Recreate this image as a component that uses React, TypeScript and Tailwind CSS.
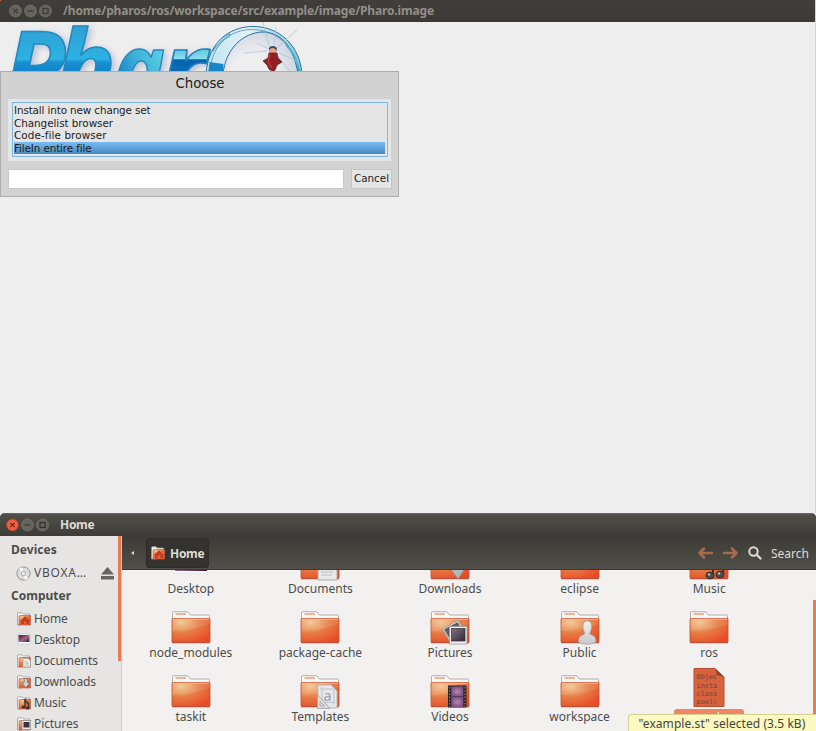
import React from "react";

const ui = "font-['Noto_Sans',sans-serif]";

function WinButtons({ active }: { active?: boolean }) {
  const fill = active ? "#66645e" : "#65635d";
  const ink = active ? "#2f2e2a" : "#3b3a36";
  return (
    <svg width="45" height="14" viewBox="0 0 45 14" className="shrink-0">
      <circle cx="7.500" cy="7" r="6" fill={active ? "#ee6040" : fill} stroke={active ? "#a63c20" : "#74726c"} strokeWidth=".7" />
      <path d="M5.300 4.800l4.400 4.400M9.700 4.800L5.300 9.200" stroke={active ? "#6f2815" : ink} strokeWidth="1.2" />
      <circle cx="22.500" cy="7" r="6" fill={fill} stroke="#787670" strokeWidth=".7" />
      <path d="M19.500 7h6" stroke={ink} strokeWidth="1.2" />
      <circle cx="37.500" cy="7" r="6" fill={fill} stroke="#787670" strokeWidth=".7" />
      <rect x="35" y="4.500" width="5" height="5" fill="none" stroke={ink} strokeWidth="1.200" />
    </svg>
  );
}

function PharoLogo() {
  return (
    <svg width="320" height="120" viewBox="0 22 320 120" className="block">
      <defs>
        <linearGradient id="blue" gradientUnits="userSpaceOnUse" x1="0" y1="25" x2="0" y2="80">
          <stop offset="0" stopColor="#2f9fd4" />
          <stop offset=".62" stopColor="#2bb3e2" />
          <stop offset=".68" stopColor="#178fd2" />
          <stop offset="1" stopColor="#0c7cc4" />
        </linearGradient>
        <linearGradient id="cyan" gradientUnits="userSpaceOnUse" x1="0" y1="48" x2="0" y2="76">
          <stop offset="0" stopColor="#5cc3e0" />
          <stop offset=".38" stopColor="#8bdcec" />
          <stop offset=".42" stopColor="#0863ae" />
          <stop offset="1" stopColor="#0870bb" />
        </linearGradient>
        <linearGradient id="teal" gradientUnits="userSpaceOnUse" x1="118" y1="74" x2="165" y2="50">
          <stop offset="0" stopColor="#1787cb" />
          <stop offset=".5" stopColor="#42b5d8" />
          <stop offset="1" stopColor="#5cd3e6" />
        </linearGradient>
        <linearGradient id="ring" x1="0" y1="0" x2="1" y2="0">
          <stop offset="0" stopColor="#bfe5f0" />
          <stop offset=".45" stopColor="#e4f3f7" />
          <stop offset="1" stopColor="#79cbe0" />
        </linearGradient>
        <radialGradient id="glow">
          <stop offset=".5" stopColor="#eeeef0" />
          <stop offset="1" stopColor="#cfd4e0" />
        </radialGradient>
      </defs>
      <g className="font-['Open_Sans',sans-serif] font-bold italic drop-shadow-[3px_2px_3px_rgba(130,145,190,0.5)]" strokeWidth="1.600" fontSize="100">
        <text x="4" y="103.500" textLength="61" lengthAdjust="spacingAndGlyphs" fill="url(#blue)" stroke="#2489bf">P</text>
        <text x="55" y="102.500" textLength="61" lengthAdjust="spacingAndGlyphs" fill="url(#blue)" stroke="#2489bf">h</text>
        <text x="113" y="105" textLength="52" lengthAdjust="spacingAndGlyphs" fill="url(#teal)" stroke="#2489bf">a</text>
        <text x="160" y="105" textLength="46" lengthAdjust="spacingAndGlyphs" fill="url(#cyan)" stroke="#2383bb">r</text>
      </g>
      <ellipse cx="254" cy="76" rx="45" ry="47" fill="url(#glow)" />
      <path fillRule="evenodd" d="M206 74C208 44 228 26.500 253 26.500C280 26.500 300 46 302 74L298 74C294 48 282 32 262 32C244 33 226 47 223 74Z" fill="url(#ring)" stroke="#2b709e" strokeWidth="1" />
      <path d="M209.500 62L223.500 64L223 74H208Z" fill="#1688c9" />
      <path d="M210 74C210 51 224 31 250 29.500C276 29 295 46 300 74" fill="none" stroke="#3a7ba5" strokeWidth=".7" />
      <path d="M213 51C216 42 222 36 230 34L229 37C223 39 218 44 213 51Z" fill="#92d9ee" stroke="#2b709e" strokeWidth=".6" />
      <path d="M287 45C294 52 298 62 299 72L295 61C293 54 289 49 286 46Z" fill="#5fcbe4" stroke="#2b8dad" strokeWidth=".5" />
      <path d="M269 46L263 22M274 45L276 27M277 48L297 30M279 53L299 62M267 51L244 53M269 49L257 43M276 54L293 75" stroke="#a9c6dc" strokeWidth=".8" />
      <path d="M269 49C268 45 277 45 277 49L276 52H270Z" fill="#34536c" />
      <path d="M270 49C272 47 275 48 276 50L277 54H269Z" fill="#f3a174" />
      <path d="M269 53H277L278 58L282 62L277 65L275 70L273 72L269 69L267 65L263 61L268 58Z" fill="#941e24" stroke="#4d2d38" strokeWidth=".8" />
      <path d="M270 54L268 62L272 68" fill="none" stroke="#c84748" strokeWidth="1" />
    </svg>
  );
}

const choices = [
  ["Install into new change set", "tracking-[-0.13px]"],
  ["Changelist browser", "tracking-[-0.05px]"],
  ["Code-file browser", "tracking-[0.09px]"],
  ["FileIn entire file", "w-[371px] bg-linear-to-b from-[#78bdf5] to-[#4b87bd] tracking-[-0.13px]"],
];

function ChooseDialog() {
  return (
    <div className="absolute left-0 top-[71px] flex h-[126px] w-[399px] flex-col border border-[#aeaeae] bg-[#d2d2d2] pl-[7px] font-['DejaVu_Sans',sans-serif] text-[#1c1c1c]">
      <div className="mt-1 flex h-[23px] items-start justify-center pr-[6px] text-[13.3px] leading-[16px]">Choose</div>
      <div className="h-[62px] w-[383px] bg-[#e5e5e5] px-1 pt-[3px]">
        <div className="h-[55px] w-[376px] border border-[#7db5e5] px-px pt-px">
          {choices.map(([label, look]) => (
            <div key={label} className={`h-[12.5px] whitespace-nowrap text-[10.4px] leading-[12.5px] ${look}`}>{label}</div>
          ))}
        </div>
      </div>
      <div className="mt-2 flex gap-[7px]">
        <div className="h-5 w-[336px] border border-[#c8c8c8] bg-white" />
        <div className="flex h-5 w-[41px] items-center justify-center border border-[#c6c6c6] bg-[#e5e5e5] text-[10.4px]">Cancel</div>
      </div>
    </div>
  );
}

type Kind = "plain" | "desktop" | "docs" | "down" | "music" | "pics" | "public" | "templates" | "video" | "home";

function Emblem({ kind }: { kind: Kind }) {
  switch (kind) {
    case "docs":
      return <g><path d="M18 12H33L37 16V33H18Z" fill="#e8e8e8" stroke="#aaa" /><path d="M21 18H33M21 22H33M21 25H33M21 28H32" stroke="#bbb" /></g>;
    case "down":
      return <path d="M23 10H31V20H36L28 32L19 20H23Z" fill="#b8b8b8" stroke="#9a8a84" />;
    case "music":
      return <g fill="#4c4b49" stroke="#333"><ellipse cx="21" cy="28.500" rx="4" ry="3.500" /><ellipse cx="31" cy="27.500" rx="4" ry="3.500" /><path d="M24 27V12L34 10V26" fill="none" strokeWidth="2" /><circle cx="20" cy="27.500" r="1.200" fill="#bbb" stroke="none" /><circle cx="30" cy="26.500" r="1.200" fill="#bbb" stroke="none" /></g>;
    case "pics":
      return (
        <g>
          <path d="M13 18L28 10L34 22L20 30Z" fill="#625b62" stroke="#ddd" strokeWidth="1.500" />
          <path d="M19 29L12.300 18L28 9.200L31 14" fill="none" stroke="#777" strokeWidth=".6" />
          <rect x="19.500" y="15.500" width="17.500" height="17.500" fill="#eee" stroke="#999" strokeWidth=".8" />
          <rect x="21.500" y="17.500" width="13.500" height="12.500" fill="url(#photo)" stroke="#342d37" strokeWidth=".7" />
        </g>
      );
    case "public":
      return <path d="M18.500 31C18.500 26 20 25 24 23.500C25.500 22.500 23.500 20 23 17V14C23.500 8.500 31 8.500 31.500 14V17C31 20 29 22.500 30.500 23.500C34.500 25 36 26 36 31C31 34 23 34 18.500 31Z" fill="url(#silver)" stroke="#a3a3a3" strokeWidth=".8" />;
    case "templates":
      return (
        <g>
          <path d="M18 10H31L37 16V33H26L18 24Z" fill="#e8e8ea" stroke="#bbb" />
          <path d="M20 14H34M22 12V27M34 14V29M20 27.500H35" stroke="#c1c2c8" />
          <text x="23.500" y="26" fontSize="14" fill="#a0a2b0" className="font-['Noto_Sans',sans-serif] font-medium">a</text>
          <path d="M17.500 20V33.300H30Z" fill="#e0e0e4" stroke="#aaa" /><path d="M20 26V31H25Z" fill="#cfcdd3" stroke="#b3b3b8" />
        </g>
      );
    case "video":
      return (
        <g>
          <rect x="18" y="10.500" width="18.500" height="22" fill="#29242a" />
          <rect x="21.300" y="11.500" width="12" height="10" fill="url(#film)" />
          <rect x="21.300" y="22" width="12" height="10" fill="url(#film)" />
          <path d="M19.600 12V32M35 12V32" stroke="#b6745c" strokeWidth="1.200" strokeDasharray="1.500 1.700" />
        </g>
      );
    default:
      return null;
  }
}

function Folder({ kind }: { kind: Kind }) {
  if (kind === "desktop") {
    return (
      <svg width="40" height="34" viewBox="0 0 40 34" className="block">
        <rect x="1" y="1" width="38" height="25" rx="2" fill="#fff" stroke="#ddd" strokeWidth=".7" />
        <rect x="4" y="4" width="32" height="20" fill="url(#desk)" />
      </svg>
    );
  }
  return (
    <svg width="40" height="34" viewBox="0 0 40 34" className="block">
      <path d="M1.500 9V1.500Q1.500 .7 2.500 .7H16Q17 .7 18 2L19.300 4H37.500Q38.500 4 38.500 5V9Z" fill="#f8f8f8" stroke="#aaa7a5" strokeWidth=".9" />
      <path d="M4.500 3H15" stroke="#f39c72" strokeWidth="1.300" />
      <rect x="1" y="7.500" width="38" height="24" rx="1" fill="url(#fold)" stroke="#c15130" strokeWidth=".8" />
      <path d="M2 8.300H38" stroke="#f3b48e" />
      <path d="M1.500 20C15 20 29 17 38.500 13V8H1.500Z" fill="#fff" opacity=".1" />
      <path d="M1 31.800H39" stroke="#a94831" strokeWidth=".8" />
      <Emblem kind={kind} />
    </svg>
  );
}

function SmallEmblem({ kind }: { kind: Kind }) {
  switch (kind) {
    case "home":
      return <path d="M2.800 9L8 4.200L13.300 9L12 9.500V12H9.200V9.800H7V12H4.200V9.500Z" fill="#c5401f" />;
    case "docs":
      return <g><path d="M6 4.500H11L13.500 6.500V13H6Z" fill="#eee" stroke="#999" strokeWidth=".7" /><path d="M7.500 7.500H11M7.500 9.300H12M7.500 11H12" stroke="#aaa" strokeWidth=".7" /></g>;
    case "down":
      return <path d="M7.300 3.500H10.300V7.500H13L8.800 12.700L4.800 7.500H7.300Z" fill="#d5d5d5" stroke="#777" strokeWidth=".8" />;
    case "music":
      return <g fill="#3a3937"><ellipse cx="6.500" cy="11" rx="2" ry="1.600" /><ellipse cx="10.500" cy="12" rx="2" ry="1.600" /><path d="M7.500 11V3.500L9 2.500V5L12 7V12H11V8L8.500 6V11Z" stroke="#3a3937" strokeWidth=".5" /></g>;
    case "pics":
      return <g><rect x="5" y="3.500" width="8.800" height="9" fill="#eee" stroke="#888" strokeWidth=".7" /><rect x="6.500" y="5" width="6" height="5.500" fill="#3d3340" /></g>;
    default:
      return null;
  }
}

function SmallFolder({ kind }: { kind: Kind }) {
  if (kind === "desktop") {
    return (
      <svg width="14" height="14" viewBox="0 0 14 14" className="block">
        <rect x=".5" y="1" width="13" height="10" rx="1" fill="#fff" stroke="#bbb" strokeWidth=".6" />
        <rect x="1.500" y="2" width="11" height="7" fill="url(#desk)" />
      </svg>
    );
  }
  return (
    <svg width="14" height="14" viewBox="0 0 14 14" className="block">
      <path d="M.5 13V1.500Q.5 .8 1.200 .8H5L6.300 2H12.500V5H4V13Z" fill="#fafafa" stroke="#9c9894" strokeWidth=".8" />
      <path d="M2 12.500V4.500Q2 3.500 3 3.500H13.500V13H2Z" fill="url(#fold)" stroke="#bd6547" strokeWidth=".7" />
      <SmallEmblem kind={kind} />
    </svg>
  );
}

function PaintDefs() {
  return (
    <svg width="0" height="0" className="absolute">
      <defs>
        <radialGradient id="fold" cx=".25" cy=".15" r=".95">
          <stop offset="0" stopColor="#f2c58d" />
          <stop offset=".5" stopColor="#e67c44" />
          <stop offset="1" stopColor="#e94b27" />
        </radialGradient>
        <linearGradient id="photo" x1="0" y1="0" x2="1" y2="1"><stop stopColor="#83717d" /><stop offset="1" stopColor="#30283a" /></linearGradient>
        <linearGradient id="silver" x1="0" y1="0" x2="0" y2="1"><stop stopColor="#f0f0f0" /><stop offset="1" stopColor="#c8c8c8" /></linearGradient>
        <radialGradient id="film"><stop stopColor="#b786b4" /><stop offset="1" stopColor="#805182" /></radialGradient>
        <linearGradient id="desk" x1="0" y1="0" x2="1" y2="1"><stop stopColor="#3a1730" /><stop offset=".55" stopColor="#a4668a" /><stop offset="1" stopColor="#351329" /></linearGradient>
      </defs>
    </svg>
  );
}

const files: { name: string; kind: Kind }[] = [
  { name: "Desktop", kind: "desktop" },
  { name: "Documents", kind: "docs" },
  { name: "Downloads", kind: "down" },
  { name: "eclipse", kind: "plain" },
  { name: "Music", kind: "music" },
  { name: "node_modules", kind: "plain" },
  { name: "package-cache", kind: "plain" },
  { name: "Pictures", kind: "pics" },
  { name: "Public", kind: "public" },
  { name: "ros", kind: "plain" },
  { name: "taskit", kind: "plain" },
  { name: "Templates", kind: "templates" },
  { name: "Videos", kind: "video" },
  { name: "workspace", kind: "plain" },
];

const places: { name: string; kind: Kind }[] = [
  { name: "Home", kind: "home" },
  { name: "Desktop", kind: "desktop" },
  { name: "Documents", kind: "docs" },
  { name: "Downloads", kind: "down" },
  { name: "Music", kind: "music" },
  { name: "Pictures", kind: "pics" },
];

function SelectedFile() {
  return (
    <div className="-mt-[7px] flex flex-col items-center">
      <svg width="32" height="39" viewBox="0 0 32 39" className="block">
        <path d="M1 .5H22L31 9V38.500H1Z" fill="#d9623e" stroke="#b74e31" />
        <path d="M22 .5L24 7L31 9Z" fill="#984026" />
        <g className="font-['DejaVu_Sans_Mono',monospace]" fontSize="6.900" fill="#73402f">
          <text x="3.500" y="11">Objec</text><text x="3.500" y="19.500">insta</text><text x="3.500" y="28">class</text><text x="3.500" y="36">pool▯</text>
        </g>
      </svg>
      <div className="mt-[2px] h-[18px] w-[70px] rounded-t-[3px] bg-[#f08763] text-center text-[12px] leading-[17px] text-white">example.st</div>
    </div>
  );
}

function Sidebar() {
  return (
    <div className="flex h-[195px] w-[122px] shrink-0 justify-between overflow-hidden border-r border-[#d0cecc] bg-[#e6e5e4]">
      <div className="flex flex-col pl-[11px] text-[12px] text-[#4c4c4c]">
        <div className="h-[25px] shrink-0 font-bold leading-[27px] tracking-[0.05px]">Devices</div>
        <div className="flex h-[24px] shrink-0 items-center gap-[3px] pl-[5px]">
          <svg width="15" height="15" viewBox="0 0 15 15"><circle cx="7.500" cy="7.500" r="6.600" fill="#dedede" stroke="#929292" /><path d="M7.500 7.500L3 2.500L6 1.300ZM7.500 7.500L9 14L12 12.500Z" fill="#fafafa" /><circle cx="7.500" cy="7.500" r="2.200" fill="#eee" stroke="#999" strokeWidth=".8" /></svg>
          <span className="w-[64px] tracking-[0.8px]">VBOXA…</span>
          <svg width="13" height="13" viewBox="0 0 13 13"><path d="M6.500 0L13 7.500H0Z" fill="#666562" /><path d="M0 9H13V12.500H0Z" fill="#666562" /></svg>
        </div>
        <div className="h-[23px] shrink-0 font-bold leading-[22px]">Computer</div>
        {places.map((p) => (
          <div key={p.name} className="flex h-[21px] shrink-0 items-center gap-[3px] pl-[6px]">
            <SmallFolder kind={p.kind} />
            <span className="pt-px tracking-[-0.1px]">{p.name}</span>
          </div>
        ))}
      </div>
      <div className="h-[125px] w-[3px] shrink-0 bg-[#f07850]" />
    </div>
  );
}

function FileManager() {
  return (
    <div className={`relative flex h-[218px] flex-col overflow-hidden rounded-t-[5px] bg-[#3c3b37] ${ui}`}>
      <div className="flex h-[23px] shrink-0 items-center border-t border-[#686761] bg-linear-to-b from-[#504f49] to-[#3d3c38] pl-[5px]">
        <WinButtons active />
        <span className="ml-[10px] text-[12px] font-bold leading-none tracking-[-0.3px] text-[#dfdbd2]">Home</span>
      </div>
      <div className="flex">
        <Sidebar />
        <div className="flex min-w-0 grow flex-col">
          <div className="flex h-[34px] shrink-0 items-center border-b border-[#383733] bg-linear-to-b from-[#3c3b37] to-[#504f49] text-[12px] text-[#dfdbd2]">
            <div className="ml-[9px] h-0 w-0 border-y-[2px] border-r-[3px] border-y-transparent border-r-[#dfdbd2]" />
            <div className="ml-[12px] flex h-[30px] w-[63px] items-center gap-[5px] rounded-[3px] border border-[#2e2d2a] bg-[#34332f] pl-[4px] font-bold">
              <SmallFolder kind="home" />
              <span className="pt-[2px] tracking-[-0.3px]">Home</span>
            </div>
            <svg width="40" height="14" viewBox="0 0 40 14" className="ml-auto" fill="none" stroke="#a86b4c" strokeWidth="2.500" strokeLinecap="round" strokeLinejoin="round">
              <path d="M14 7H2M6 2.500L1.500 7L6 11.500" /><path d="M26 7H38M34 2.500L38.500 7L34 11.500" />
            </svg>
            <svg width="14" height="14" viewBox="0 0 14 14" className="ml-[10px]" fill="none" stroke="#dfdbd2" strokeLinecap="round"><circle cx="5.500" cy="5.500" r="4.200" strokeWidth="2" /><path d="M9 9L12.500 12.500" strokeWidth="2.400" /></svg>
            <span className="ml-[9px] mr-[7px] pt-[2px]">Search</span>
          </div>
          <div className="flex h-[161px] justify-between overflow-hidden bg-[#f2f1f0] text-[12px] text-[#4c4c4c]">
            <div className="-mt-[23px] ml-[4px] grid h-[200px] w-[648px] shrink-0 grid-cols-5 grid-rows-[64px_64px_64px]">
              {files.map((f) => (
                <div key={f.name} className="flex flex-col items-center">
                  <Folder kind={f.kind} />
                  <span className="mt-[-1px] leading-[17px]">{f.name}</span>
                </div>
              ))}
              <SelectedFile />
            </div>
            <div className="mt-[30px] h-[131px] w-[3px] bg-[#f07850]" />
          </div>
        </div>
      </div>
      <div className="absolute bottom-0 right-0 flex h-[17px] w-[188px] items-center justify-center whitespace-nowrap rounded-tl-[3px] border-l border-t border-[#d5d291] bg-[#fcfac0] pt-[2px] pr-px text-[12px] tracking-[0.06px] text-[#45443f]">
        "example.st" selected (3.5 kB)
      </div>
    </div>
  );
}

export default function App() {
  return (
    <div className="flex h-[731px] w-[816px] flex-col overflow-hidden bg-[#efeeee]">
      <PaintDefs />
      <div className="relative flex h-[513px] flex-col border-r border-[#d2d2d2]">
        <div className={`flex h-[22px] shrink-0 items-center bg-linear-to-b from-[#403f3b] to-[#3a3935] pl-[8px] ${ui}`}>
          <WinButtons />
          <span className="ml-[10px] text-[12px] font-bold leading-none tracking-[-0.16px] text-[#928f88]">/home/pharos/ros/workspace/src/example/image/Pharo.image</span>
        </div>
        <PharoLogo />
        <ChooseDialog />
        <div className="absolute left-0 top-0 h-px w-px bg-[#d8603c]" />
      </div>
      <FileManager />
    </div>
  );
}
